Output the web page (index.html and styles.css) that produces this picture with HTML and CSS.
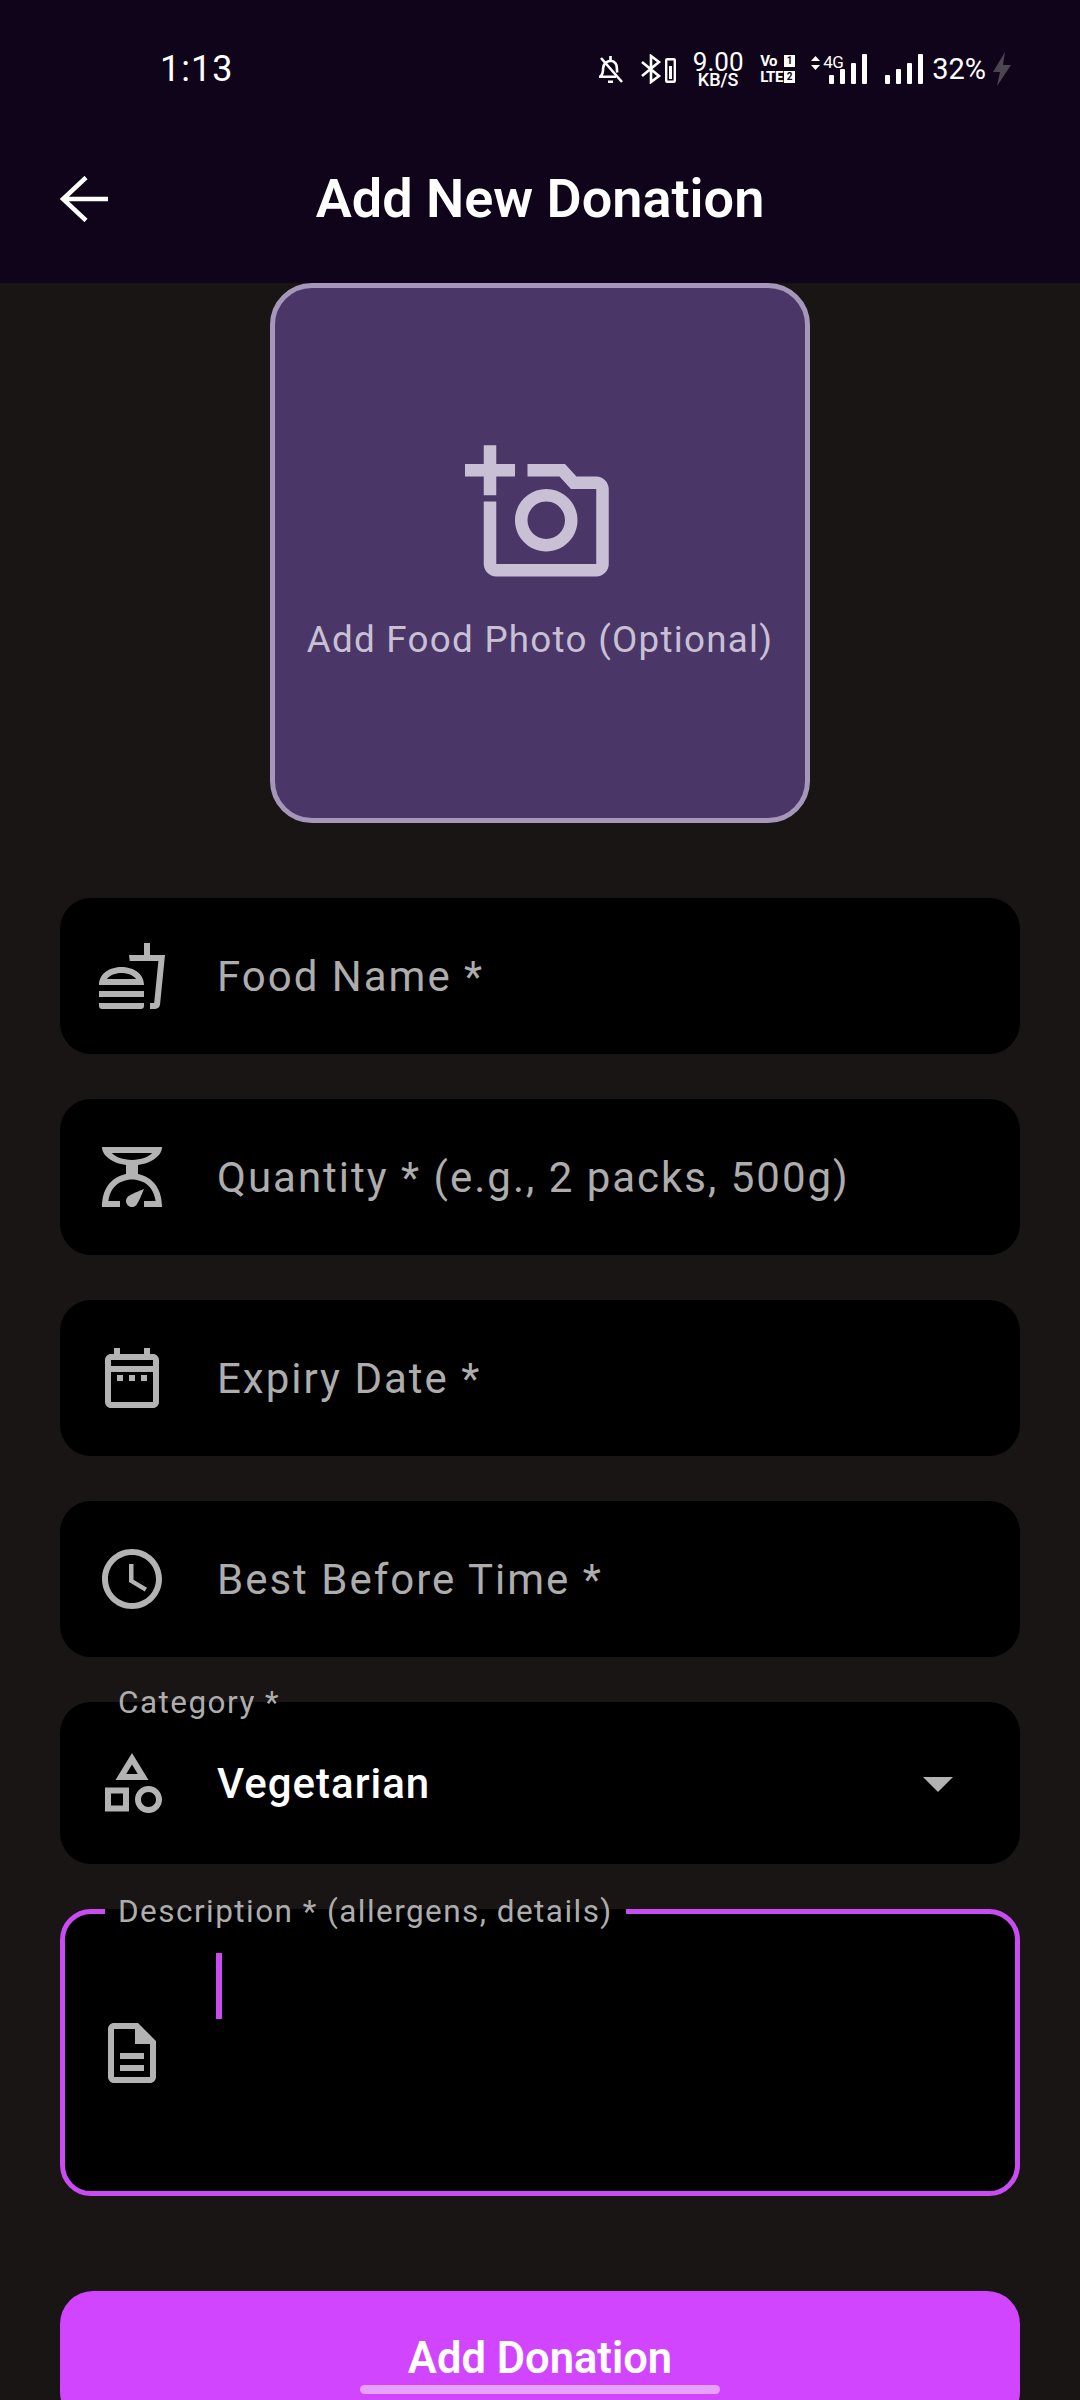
FILE: index.html
```html
<!DOCTYPE html>
<html lang="en">

<head>
    <meta charset="UTF-8">
    <meta name="viewport" content="width=device-width, initial-scale=1.0">
    <title>Add New Donation</title>
    <link rel="stylesheet" href="styles.css">
</head>

<body>
    <header class="top">
        <div class="status-bar">
            <span class="time">1:13</span>
            <div class="status-icons">
                <svg class="st-bell" viewBox="0 0 25 28" fill="none" stroke="#fff" stroke-width="2.6">
                    <path d="M2.500 21.500c2-2 2.600-4 2.600-8 0-4 3-7.400 7.400-7.800 4 .4 6.400 3.400 6.400 7.800 0 1.500.1 2.800.4 4M1 21.800h17" />
                    <path d="M3 3l21 24" />
                    <path d="M12.500 1v4M10 26.700h5" />
                </svg>
                <svg class="st-bt" viewBox="0 0 35 30" fill="none" stroke="#fff">
                    <path stroke-width="2.600" d="M1 8l17 14-8 6V2l8 6-17 14" />
                    <rect x="25.200" y="5.200" width="8.600" height="22.600" rx="1" stroke-width="2.400" />
                    <rect x="28" y="12" width="3" height="13" fill="#fff" stroke="none" />
                </svg>
                <div class="speed">
                    <span class="speed-num">9.00</span>
                    <span class="speed-unit">KB/S</span>
                </div>
                <div class="volte">
                    <span class="volte-txt">Vo</span>
                    <span class="volte-box">1</span>
                    <span class="volte-txt">LTE</span>
                    <span class="volte-box">2</span>
                </div>
                <div class="sim">
                    <svg class="sim-arrows" viewBox="0 0 9 14" fill="#fff">
                        <path d="M4.500 0L9 5H0zM4.500 14L0 9h9z" />
                    </svg>
                    <span class="sim-type">4G</span>
                    <svg class="sim-bars" viewBox="0 0 38 30" fill="#fff">
                        <rect x="0" y="21" width="5" height="9" rx="1" />
                        <rect x="11" y="15" width="5" height="15" rx="1" />
                        <rect x="22" y="9" width="5" height="21" rx="1" />
                        <rect x="33" y="0" width="5" height="30" rx="1" />
                    </svg>
                </div>
                <svg class="sim-bars sim-two" viewBox="0 0 38 30" fill="#fff">
                    <rect x="0" y="21" width="5" height="9" rx="1" />
                    <rect x="11" y="15" width="5" height="15" rx="1" />
                    <rect x="22" y="9" width="5" height="21" rx="1" />
                    <rect x="33" y="0" width="5" height="30" rx="1" />
                </svg>
                <span class="battery">32%</span>
                <svg class="st-bolt" viewBox="0 0 18 34" fill="#4a4550">
                    <path d="M12 0L0 20h7L4 34 18 13h-8z" />
                </svg>
            </div>
        </div>
        <div class="app-bar">
            <svg class="back" viewBox="0 0 48 46" fill="none" stroke="#fff" stroke-width="4.500">
                <path d="M26 1.500L3 23l23 21.500M3 23h45" />
            </svg>
            <h1>Add New Donation</h1>
        </div>
    </header>

    <main class="form">
        <div class="photo-box">
            <svg class="photo-icon" viewBox="0 0 24 24" fill="currentColor">
                <path d="M21 6h-3.170L16 4h-6v2h5.120l1.830 2H21v12H5V10H3v10c0 1.100.900 2 2 2h16c1.100 0 2-.900 2-2V8c0-1.100-.900-2-2-2zM8 13c0 2.760 2.240 5 5 5s5-2.240 5-5-2.240-5-5-5-5 2.240-5 5zm5-3c1.650 0 3 1.350 3 3s-1.350 3-3 3-3-1.350-3-3 1.350-3 3-3zM5 6h3V4H5V1H3v3H0v2h3v3h2z" />
            </svg>
            <span class="photo-label">Add Food Photo (Optional)</span>
        </div>

        <div class="fields">
            <div class="field">
                <svg class="ficon" viewBox="0 0 24 24" fill="currentColor">
                    <path d="M1 21.980c0 .560.450 1.010 1.010 1.010H15c.560 0 1.010-.450 1.010-1.010V21H1v.980zM8.500 8.990C4.750 8.990 1 11 1 15h15c0-4-3.750-6.010-7.500-6.010zM3.620 13c1.110-1.550 3.470-2.010 4.880-2.010s3.770.460 4.880 2.010H3.620zM1 17h15v2H1zM18 5V1h-2v4h-5l.230 2h9.560l-1.400 14H18v2h1.720c.840 0 1.530-.650 1.630-1.470L23 5h-5z" />
                </svg>
                <span class="hint">Food Name *</span>
            </div>
            <div class="field">
                <svg class="ficon" viewBox="0 0 24 24" fill="currentColor" fill-rule="evenodd">
                    <path d="M14 11V8c4.560-.580 8-3.100 8-6H2c0 2.900 3.440 5.420 8 6v3c-3.680.730-8 3.610-8 11h6v-2H4.130c.930-6.830 6.650-7.200 7.870-7.200s6.940.370 7.870 7.200H16v2h6c0-7.390-4.320-10.270-8-11zM5.300 4h13.400c-1.200 1.300-3.700 2.300-6.700 2.300S6.500 5.300 5.300 4zM12 22c-1.100 0-2-.900-2-2 0-.550.220-1.050.590-1.410C11.390 17.790 16 16 16 16s-1.790 4.610-2.590 5.410c-.360.370-.860.590-1.410.590z" />
                </svg>
                <span class="hint">Quantity * (e.g., 2 packs, 500g)</span>
            </div>
            <div class="field">
                <svg class="ficon" viewBox="0 0 24 24" fill="currentColor">
                    <path d="M7 11h2v2H7zm4 0h2v2h-2zm4 0h2v2h-2zM19 4h-1V2h-2v2H8V2H6v2H5c-1.110 0-2 .900-2 2v14c0 1.100.890 2 2 2h14c1.100 0 2-.900 2-2V6c0-1.100-.900-2-2-2zm0 16H5V10h14v10zM5 8V6h14v2H5z" />
                </svg>
                <span class="hint">Expiry Date *</span>
            </div>
            <div class="field">
                <svg class="ficon" viewBox="0 0 24 24" fill="currentColor">
                    <path d="M11.990 2C6.470 2 2 6.480 2 12s4.470 10 9.990 10C17.520 22 22 17.520 22 12S17.520 2 11.990 2zM12 20c-4.420 0-8-3.580-8-8s3.580-8 8-8 8 3.580 8 8-3.580 8-8 8zm.5-13H11v6l5.250 3.150.750-1.230-4.500-2.670z" />
                </svg>
                <span class="hint">Best Before Time *</span>
            </div>
            <div class="field field-select">
                <span class="float-label">Category *</span>
                <svg class="ficon" viewBox="0 0 24 24" fill="currentColor">
                    <path d="M12 2l-5.500 9h11L12 2zm0 3.840L13.930 9h-3.870L12 5.840zM17.500 13c-2.490 0-4.500 2.010-4.500 4.500s2.010 4.500 4.500 4.500 4.500-2.010 4.500-4.500-2.010-4.500-4.500-4.500zm0 7c-1.380 0-2.500-1.120-2.500-2.500s1.120-2.500 2.500-2.500 2.500 1.120 2.500 2.500-1.120 2.500-2.500 2.500zM3 21.500h8v-8H3v8zm2-6h4v4H5v-4z" />
                </svg>
                <span class="value">Vegetarian</span>
                <span class="caret"></span>
            </div>
            <fieldset class="field-desc">
                <legend>Description * (allergens, details)</legend>
                <div class="desc-body">
                    <svg class="ficon" viewBox="0 0 24 24" fill="currentColor">
                        <path d="M8 16h8v2H8zm0-4h8v2H8zm6-10H6c-1.100 0-2 .900-2 2v16c0 1.100.890 2 1.990 2H18c1.100 0 2-.900 2-2V8l-6-6zm4 18H6V4h7v5h5v11z" />
                    </svg>
                    <span class="cursor"></span>
                </div>
            </fieldset>
        </div>

        <button type="button" class="submit">Add Donation</button>
    </main>

    <div class="home-bar"></div>
</body>

</html>
```

FILE: styles.css
```css
* {
    padding: 0;
    margin: 0;
    box-sizing: border-box;
}

html,
body {
    width: 1080px;
    height: 2400px;
    overflow: hidden;
    font-family: Roboto, "Noto Sans", sans-serif;
}

body {
    position: relative;
    background-color: #1a1515;
}

.top {
    height: 283px;
    background-color: #10041a;
    color: #fff;
}

/* status bar */
.status-bar {
    display: flex;
    align-items: center;
    height: 99px;
    padding-top: 39px;
    padding-left: 160px;
}

.time {
    font-size: 36px;
    letter-spacing: 1px;
    font-weight: 400;
}

.status-icons {
    display: flex;
    align-items: center;
    gap: 18px;
    margin-left: auto;
    padding-right: 69px;
}

.st-bell {
    width: 25px;
    height: 28px;
}

.st-bt {
    width: 35px;
    height: 30px;
}

.speed {
    display: flex;
    flex-direction: column;
    align-items: center;
    width: 48px;
    line-height: 1;
}

.speed-num {
    font-size: 26px;
    height: 22px;
    line-height: 22px;
}

.speed-unit {
    font-size: 18px;
    line-height: 14px;
    font-weight: 500;
}

.volte {
    display: grid;
    grid-template-columns: 23px 11px;
    row-gap: 4px;
    column-gap: 1px;
    align-items: center;
}

.volte-txt {
    font-size: 15px;
    line-height: 12px;
    font-weight: 700;
    letter-spacing: -0.5px;
}

.volte-box {
    height: 12px;
    font-size: 10px;
    line-height: 12px;
    font-weight: 700;
    text-align: center;
    color: #10041a;
    background-color: #fff;
}

.sim {
    display: flex;
    align-items: flex-start;
    position: relative;
    margin-left: -2px;
    width: 56px;
    height: 30px;
}

.sim-arrows {
    width: 9px;
    height: 14px;
    margin-top: 2px;
}

.sim-type {
    font-size: 17px;
    line-height: 16px;
    margin-left: 3px;
    letter-spacing: -0.5px;
}

.sim .sim-bars {
    position: absolute;
    right: 0;
    bottom: 0;
}

.sim-bars {
    width: 38px;
    height: 30px;
}

.battery {
    font-size: 29px;
    margin-left: -9px;
}

.st-bolt {
    width: 18px;
    height: 34px;
    margin-left: -11px;
}

/* app bar */
.app-bar {
    display: grid;
    grid-template-columns: 1fr auto 1fr;
    align-items: center;
    height: 102px;
    margin-top: 49px;
    padding: 0 60px;
}

.back {
    width: 48px;
    height: 46px;
}

h1 {
    font-size: 54px;
    font-weight: 600;
    line-height: 1;
}

/* form */
.form {
    display: flex;
    flex-direction: column;
    padding: 0 60px;
}

.photo-box {
    display: flex;
    flex-direction: column;
    align-items: center;
    align-self: center;
    width: 540px;
    height: 540px;
    margin-bottom: 75px;
    padding-top: 151px;
    border: 5px solid #a596ba;
    border-radius: 42px;
    background-color: #4a3768;
    color: #c9c0d6;
}

.photo-icon {
    width: 150px;
    height: 150px;
}

.photo-label {
    margin-top: 29px;
    font-size: 36.750px;
    letter-spacing: 1.270px;
}

.fields {
    display: flex;
    flex-direction: column;
    gap: 45px;
}

.field {
    position: relative;
    display: flex;
    align-items: center;
    gap: 49px;
    height: 156px;
    padding-left: 36px;
    border-radius: 31px;
    background-color: #000;
    color: #b3b3b3;
}

.ficon {
    flex: none;
    width: 72px;
    height: 72px;
}

.hint {
    font-size: 42px;
    letter-spacing: 2px;
    color: #adadad;
}

.field-select {
    height: 162px;
}

.float-label {
    position: absolute;
    left: 58px;
    top: -17px;
    font-size: 31.500px;
    line-height: 36px;
    letter-spacing: 1.450px;
    color: #adadad;
}

.value {
    font-size: 42px;
    font-weight: 500;
    letter-spacing: 1px;
    color: #fff;
}

.caret {
    margin-left: auto;
    margin-right: 67px;
    margin-top: 2px;
    border-top: 15px solid #b3b3b3;
    border-left: 15px solid transparent;
    border-right: 15px solid transparent;
}

.field-desc {
    height: 287px;
    border: 5px solid #c94bf2;
    border-radius: 31px;
    background-color: #000;
    color: #b3b3b3;
}

.field-desc legend {
    margin-left: 40px;
    padding: 0 13px;
    line-height: 5px;
    font-size: 31.500px;
    letter-spacing: 1.450px;
    color: #adadad;
}

.desc-body {
    display: flex;
    align-items: center;
    gap: 48px;
    height: 277px;
    padding-left: 31px;
}

.cursor {
    align-self: flex-start;
    width: 6px;
    height: 66px;
    margin-top: 39px;
    background-color: #c94bf2;
}

.submit {
    height: 134px;
    margin-top: 95px;
    border: none;
    border-radius: 33px;
    background-color: #d145ff;
    color: #fff;
    font-family: inherit;
    font-size: 43.500px;
    font-weight: 600;
}

.home-bar {
    position: absolute;
    left: 360px;
    bottom: 6px;
    width: 360px;
    height: 9px;
    border-radius: 5px;
    background-color: #e8a0ff;
}
```
